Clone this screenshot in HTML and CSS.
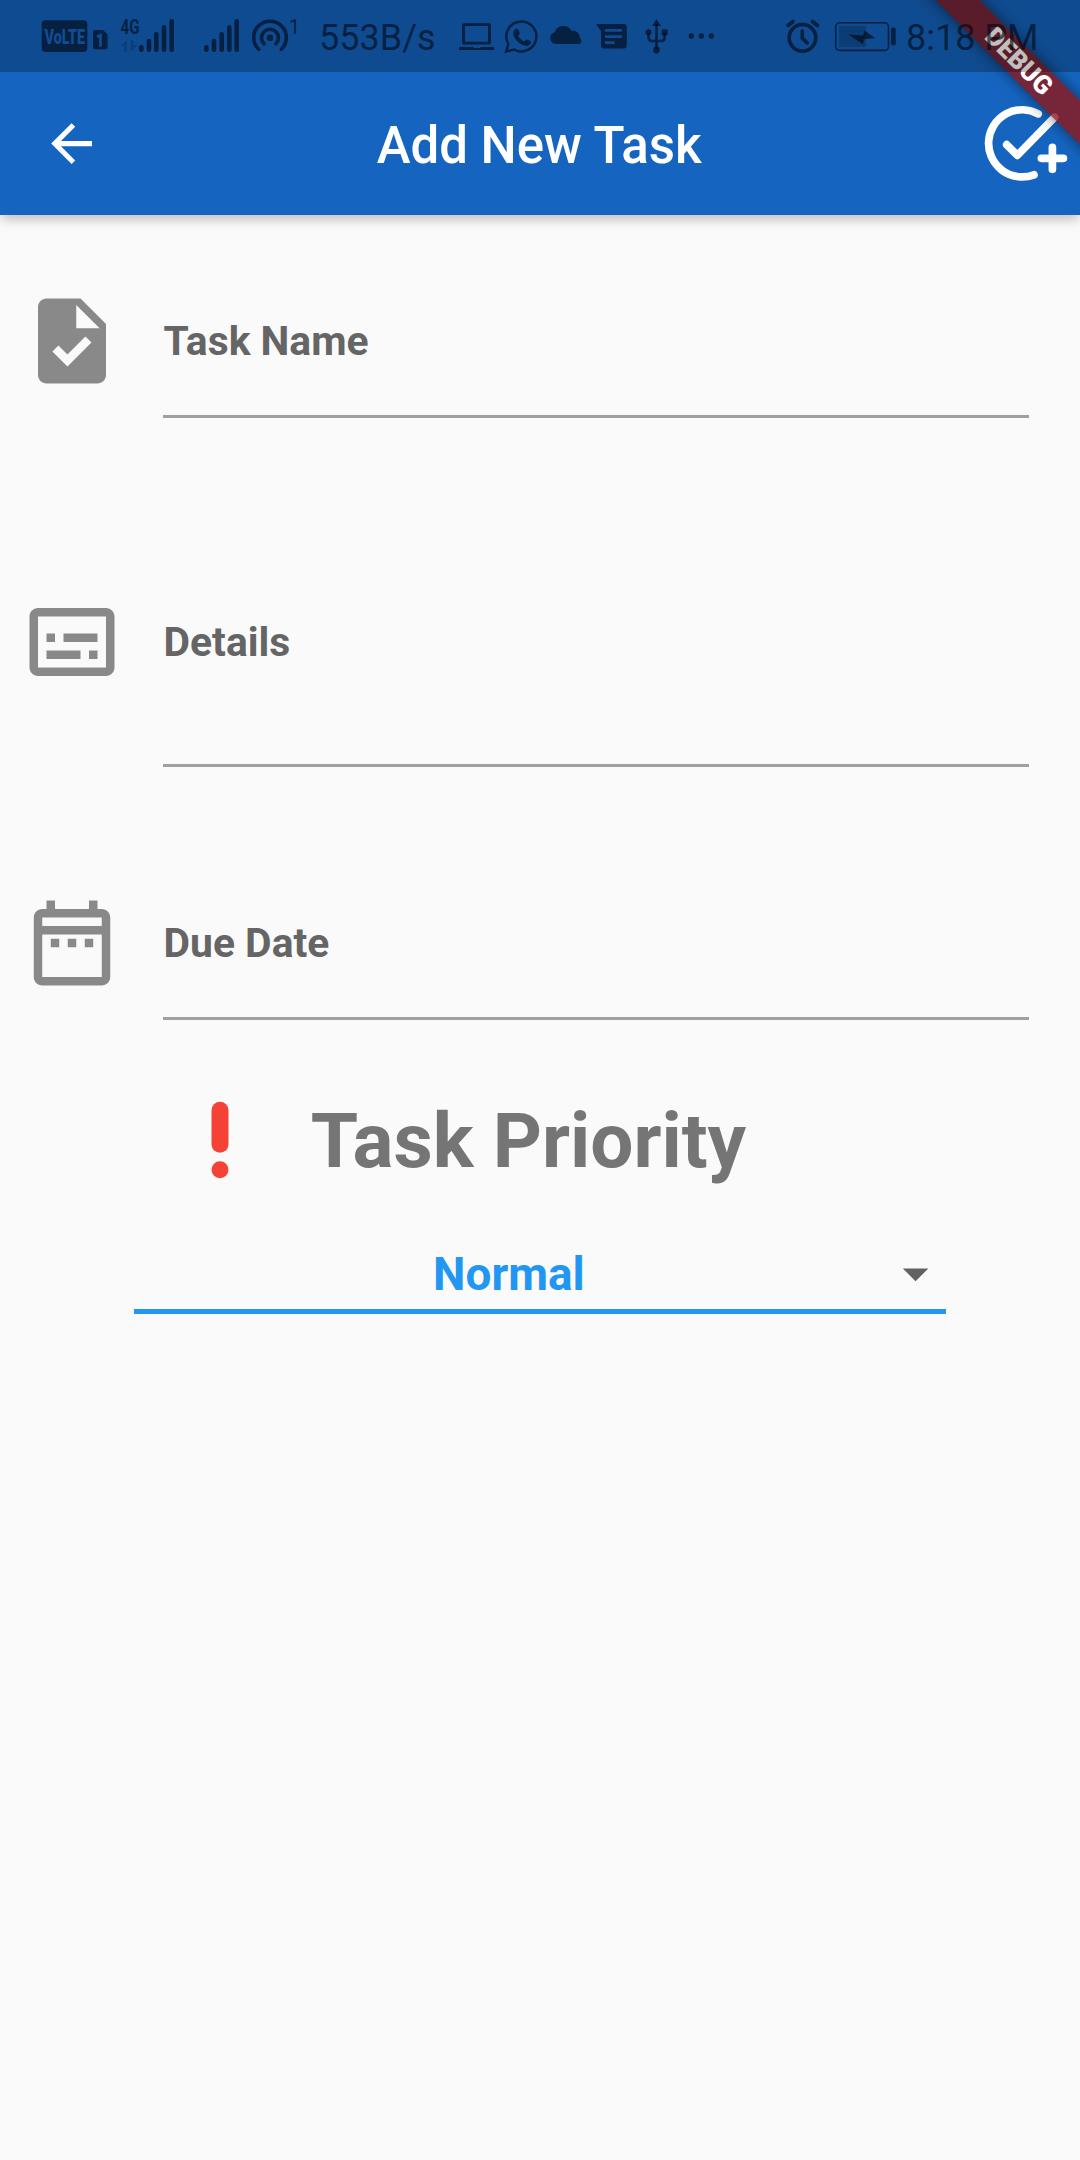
FILE: index.html
```html
<!DOCTYPE html>
<html lang="en">
<head>
<meta charset="utf-8">
<title>Add New Task</title>
<link rel="stylesheet" href="styles.css">
</head>
<body>
<div class="screen">
  <header class="app-bar">
    <svg class="back" viewBox="0 0 24 24"><path d="M20 11H7.83l5.59-5.59L12 4l-8 8 8 8 1.41-1.41L7.83 13H20v-2z"/></svg>
    <h1 class="title">Add New Task</h1>
    <svg class="add-task" viewBox="980 98 92 92">
      <path d="M1038.2 113.8A33.6 33.6 0 1 0 1034 174.8"/>
      <path d="M1006.7 144.7l10.6 10.6 37.3-38M1041.400 158.300h22M1052.400 147.300v22"/>
    </svg>
  </header>

  <main class="form">
    <div class="field">
      <svg class="field-icon" viewBox="0 0 24 24"><path d="M14 2H6c-1.100 0-2 .9-2 2v16c0 1.100.9 2 2 2h12c1.100 0 2-.9 2-2V8l-6-6zm-3.060 16L7.400 14.460l1.410-1.410 2.120 2.120 4.240-4.240 1.410 1.410L10.940 18zM13 9V3.500L18.500 9H13z"/></svg>
      <div class="input">Task Name</div>
    </div>
    <div class="field details">
      <svg class="field-icon" viewBox="0 0 24 24"><path d="M20 4H4c-1.100 0-2 .9-2 2v12c0 1.100.9 2 2 2h16c1.100 0 2-.9 2-2V6c0-1.100-.9-2-2-2zm0 14H4V6h16v12zM6 10h2v2H6zm0 4h8v2H6zm10 0h2v2h-2zm-6-4h8v2h-8z"/></svg>
      <div class="input">Details</div>
    </div>
    <div class="field due">
      <svg class="field-icon" viewBox="0 0 24 24"><path d="M7 11h2v2H7v-2zm14-5v14c0 1.100-.9 2-2 2H5c-1.110 0-2-.9-2-2l.01-14c0-1.100.88-2 1.990-2h1V2h2v2h8V2h2v2h1c1.100 0 2 .9 2 2zM5 8h14V6H5v2zm14 12V10H5v10h14zm-4-7h2v-2h-2v2zm-4 0h2v-2h-2v2z"/></svg>
      <div class="input">Due Date</div>
    </div>

    <div class="priority">
      <svg class="priority-icon" viewBox="0 0 24 24"><circle cx="12" cy="19" r="2"/><rect x="10" y="3" width="4" height="12" rx="2"/></svg>
      <h2 class="priority-label">Task Priority</h2>
    </div>
    <div class="select">
      <span class="value">Normal</span>
      <svg class="caret" viewBox="0 0 24 24"><path d="M7 10l5 5 5-5z"/></svg>
    </div>
  </main>

  <div class="debug">DEBUG</div>

  <div class="status-bar">
    <svg class="volte" viewBox="40 0 70 72">
      <rect x="41.700" y="20.300" width="45.600" height="31.700" rx="4"/>
      <text class="cut" x="44.500" y="43.700" font-size="21" textLength="40.500" lengthAdjust="spacingAndGlyphs">VoLTE</text>
      <path d="M95 30h8l4.500 4.500V47.300a2 2 0 0 1-2 2H95a2 2 0 0 1-2-2V32a2 2 0 0 1 2-2z"/>
      <path class="cut-line" d="M97 36.800l3.500-1.500v11.500"/>
    </svg>
    <svg class="mobile" viewBox="120 0 56 72">
      <text class="bold" x="120.500" y="34" font-size="21" textLength="19" lengthAdjust="spacingAndGlyphs">4G</text>
      <path class="faint" d="M121 46l6-6v12h-3v-6zM130.500 40h3v5h4l-7 7z"/>
      <path class="bars" d="M141.300 47.300v2.400M149 41v8.700M156.300 34.300v15.400M164 27.300v22.400M171.700 21.300v28.400"/>
    </svg>
    <svg class="signal" viewBox="200 0 42 72"><path class="bars" d="M206.300 47.300v2.400M214 41v8.700M221.700 34.300v15.400M229.300 27.300v22.400M236.700 21.300v28.400"/></svg>
    <svg class="hotspot" viewBox="250 0 52 72">
      <path class="ring" d="M258.600 49.200A16.300 16.300 0 1 1 281.400 49.200M264 43.800A8.500 8.500 0 1 1 276 43.800"/>
      <circle cx="270" cy="37.700" r="3.200"/>
      <text x="288.500" y="34" font-size="21">1</text>
    </svg>
    <span class="speed">553B/s</span>
    <svg class="laptop" viewBox="456 0 40 72"><path fill-rule="evenodd" d="M464 23.300h25a2 2 0 0 1 2 2V42.500a2 2 0 0 1-2 2H464a2 2 0 0 1-2-2V25.300a2 2 0 0 1 2-2zm1 2.700v15.800h23V26zM459 47h14.500v1h7v-1H494v3H459z"/></svg>
    <svg class="chat" viewBox="502 0 40 72">
      <path class="thin" d="M506.200 51.500l2.100-7.700A15 15 0 1 1 514 49.500z"/>
      <path d="M515.500 29c1.500-.8 2.700-.2 3.200 1.200l1 2.600c.4 1-.7 2-1.500 2.900 1.400 2.700 3.400 4.600 6.300 5.800.9-1 1.700-2.400 2.800-1.900l3 1.500c1.200.6.800 2.400-.2 3.400-2.600 2.400-6.300 1.200-9.200-.4-3.200-1.900-5.800-5-7.100-8.200-1-2.700-.5-5.500 1.700-6.900z"/>
    </svg>
    <svg class="cloud" viewBox="548 0 38 72"><path d="M556 44a6 6 0 0 1-1.200-11.800 9.200 9.200 0 0 1 16.800-1.200 6.700 6.700 0 0 1 8.200 7.300A3.200 3.200 0 0 1 579.500 44z"/></svg>
    <svg class="message" viewBox="594 0 36 72"><path fill-rule="evenodd" d="M596 24h28a2.800 2.800 0 0 1 2.800 2.800V45.500a3 3 0 0 1-3 3H604a3 3 0 0 1-3-3V31zM605 29v2.700h17V29zm0 6.200v2.700h17v-2.700zm0 6v2.700h9.500v-2.700z"/></svg>
    <svg class="usb" viewBox="642 0 30 72"><path class="thin" d="M656.500 24v25M648.500 33v4.500q0 3.500 3.500 3.500h9q3.500 0 3.500-3.500V33"/><path d="M656.500 19l4.500 7h-9z"/><circle cx="656.500" cy="50" r="3.400"/><circle cx="648.500" cy="32.300" r="3"/><path d="M661.700 29.300h6v6h-6z"/></svg>
    <svg class="more" viewBox="686 0 32 72"><circle cx="691.300" cy="36" r="2.700"/><circle cx="701.300" cy="36" r="2.700"/><circle cx="711.300" cy="36" r="2.700"/></svg>
    <svg class="alarm" viewBox="784 0 38 72"><circle class="ring" cx="802.500" cy="37.800" r="13.300"/><path class="ring" d="M802.300 31v7.200l5 4.800M788 25.500l5-4M812.500 21.500l5 4"/></svg>
    <svg class="battery" viewBox="832 0 68 72"><rect class="outline" x="835.700" y="22.800" width="52.800" height="27.600" rx="4"/><rect class="charge" x="839" y="26" width="27" height="21"/><path d="M848.500 34.500l14.500 1 1.500-5L875 38l-11 1.200-1 5z"/><rect x="891" y="27.500" width="4.700" height="18" rx="2"/></svg>
    <span class="time">8:18 PM</span>
  </div>
</div>
</body>
</html>
```
FILE: styles.css
```css
* { box-sizing: border-box; }

body {
  margin: 0;
  background: #fafafa;
  font-family: Roboto, sans-serif;
}

.screen {
  position: relative;
  width: 1080px;
  height: 2160px;
  overflow: hidden;
}

h1, h2 { margin: 0; }
svg { display: block; flex: none; }

/* App bar */
.app-bar {
  display: flex;
  align-items: center;
  justify-content: space-between;
  height: 215px;
  padding: 72px 8px 0 41px;
  background: #1565c0;
  color: #fff;
  box-shadow: 0 5px 10px -2.500px rgba(0, 0, 0, .15), 0 8px 10px rgba(0, 0, 0, .06), 0 2px 16px rgba(0, 0, 0, .06);
}
.back { width: 61.200px; height: 61.200px; fill: #fff; }
.title {
  padding-right: 4px;
  font-size: 51px;
  font-weight: 500;
  line-height: 60px;
  white-space: nowrap;
  transform: translateY(2px);
}
.add-task {
  width: 92px;
  height: 92px;
  fill: none;
  stroke: #fff;
  stroke-width: 7.700;
  stroke-linecap: round;
  stroke-linejoin: round;
}

/* Form */
.form { padding: 75px 51px 0 20.400px; }
.field {
  display: flex;
  align-items: flex-start;
  gap: 40px;
  height: 128px;
  color: #656565;
}
.field-icon { width: 102px; height: 102px; margin-left: .6px; fill: #898989; }
.input {
  flex: 1;
  height: 100%;
  border-bottom: 3px solid #a0a0a0;
  font-size: 40.800px;
  font-weight: 700;
  line-height: 102px;
  text-indent: .6px;
}
.details { height: 176px; margin-top: 173px; }
.due { margin-top: 125px; }

.priority {
  display: flex;
  align-items: center;
  gap: 40px;
  height: 102px;
  margin-top: 69px;
  padding-left: 148.400px;
}
.priority-icon { width: 102px; height: 102px; fill: #f44336; }
.priority-label { color: #757575; font-size: 76.500px; font-weight: 700; line-height: 102px; padding-top: 2px; }

.select {
  display: flex;
  align-items: center;
  width: 812px;
  height: 77px;
  margin: 46px 0 0 113.600px;
  padding-top: 1px;
  border-bottom: 5px solid #2196f3;
}
.value {
  flex: 1;
  padding: 1px 1px 0 0;
  color: #2196f3;
  font-size: 45.900px;
  font-weight: 700;
  text-align: center;
}
.caret { width: 61.200px; height: 61.200px; fill: #616161; }

/* Corner ribbon */
.debug {
  position: absolute;
  left: 869px;
  top: 45.500px;
  width: 300px;
  height: 30.600px;
  background: linear-gradient(rgba(183, 28, 28, .627), rgba(183, 28, 28, .627)), rgba(0, 0, 0, .45);
  box-shadow: 0 0 15.300px rgba(0, 0, 0, .5);
  color: #fff;
  font-size: 26px;
  font-weight: 900;
  line-height: 31px;
  text-align: center;
  transform: rotate(45deg);
}

/* System status bar, laid over the app bar */
.status-bar {
  position: absolute;
  inset: 0 0 auto 0;
  display: flex;
  height: 72px;
  padding-left: 40px;
  background: rgba(0, 0, 0, .25);
  color: rgba(0, 8, 20, .64);
  font-size: 36px;
  line-height: 76px;
  white-space: nowrap;
}
.status-bar svg { height: 72px; fill: currentColor; }
.volte { width: 70px; margin-right: 10px; }
.mobile { width: 56px; margin-right: 24px; }
.signal { width: 42px; margin-right: 8px; }
.hotspot { width: 52px; margin-right: 17px; }
.speed { width: 137px; }
.laptop { width: 40px; margin-right: 6px; }
.chat { width: 40px; margin-right: 6px; }
.cloud { width: 38px; margin-right: 8px; }
.message { width: 36px; margin-right: 12px; }
.usb { width: 30px; margin-right: 14px; }
.more { width: 32px; margin-right: 66px; }
.alarm { width: 38px; margin-right: 10px; }
.battery { width: 68px; margin-right: 6px; }
.bars { fill: none; stroke: currentColor; stroke-width: 4.600; stroke-linecap: round; }
.ring { fill: none; stroke: currentColor; stroke-width: 3.600; stroke-linecap: round; }
.thin { fill: none; stroke: currentColor; stroke-width: 2.500; }
.outline { fill: none; stroke: currentColor; stroke-width: 1.600; }
.charge { opacity: .35; }
.faint { opacity: .3; }
.bold { font-weight: 700; }
.cut { font-weight: 900; fill: #104d91; }
.cut-line { fill: none; stroke: #104d91; stroke-width: 2.600; }
```
